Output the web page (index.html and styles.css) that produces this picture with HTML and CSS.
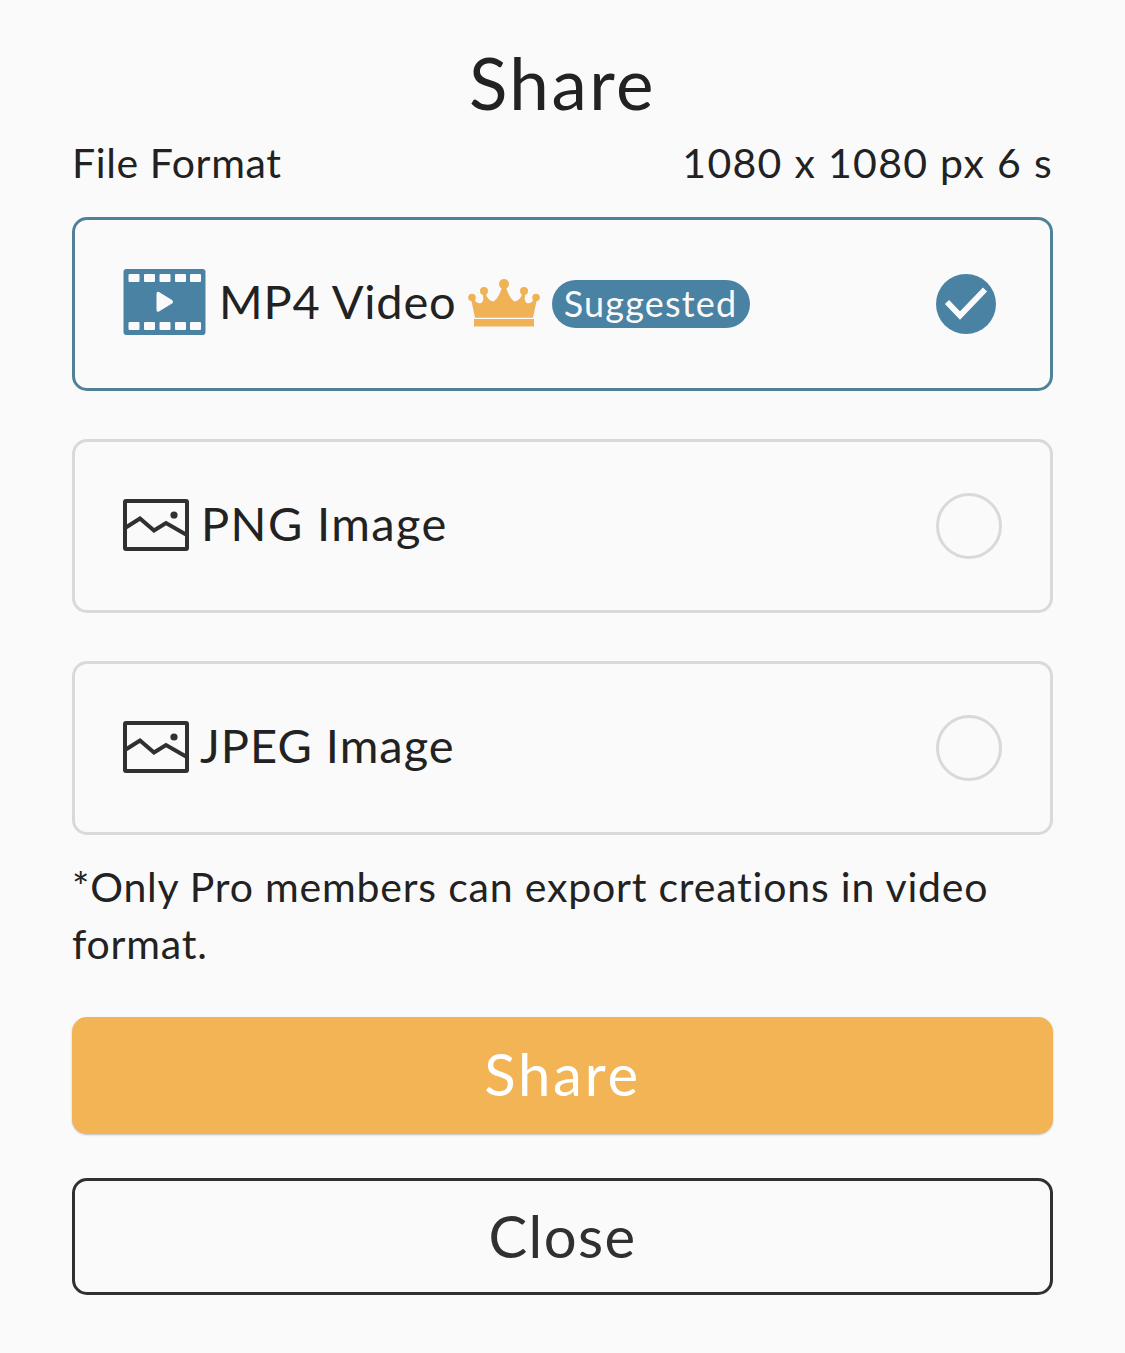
FILE: index.html
```html
<!DOCTYPE html>
<html lang="en">
<head>
  <meta charset="UTF-8">
  <meta name="viewport" content="width=device-width, initial-scale=1.0">
  <title>Share</title>
  <link rel="stylesheet" href="styles.css">
</head>
<body>

  <main class="share">
    <h1>Share</h1>

    <div class="info">
      <span class="info-label">File Format</span>
      <span class="info-size">1080 x 1080 px 6 s</span>
    </div>

    <!-- File formats -->
    <div class="options">
      <div class="option selected">
        <svg class="icon-film" viewBox="0 0 82 66">
          <rect width="82" height="66" rx="3" fill="#4a82a3"/>
          <g fill="#fafafa">
            <rect x="5" y="5" width="11" height="8" rx="1"/>
            <rect x="20.5" y="5" width="11" height="8" rx="1"/>
            <rect x="36" y="5" width="11" height="8" rx="1"/>
            <rect x="51.5" y="5" width="11" height="8" rx="1"/>
            <rect x="66.5" y="5" width="11" height="8" rx="1"/>
            <rect x="5" y="53" width="11" height="8" rx="1"/>
            <rect x="20.5" y="53" width="11" height="8" rx="1"/>
            <rect x="36" y="53" width="11" height="8" rx="1"/>
            <rect x="51.5" y="53" width="11" height="8" rx="1"/>
            <rect x="66.5" y="53" width="11" height="8" rx="1"/>
            <path d="M33 25Q33 22 35.500 23L48.500 31Q50.500 33 48.500 34.500L35.500 42.500Q33 43.500 33 41Z"/>
          </g>
        </svg>
        <span class="name">MP4 Video</span>
        <svg class="icon-crown" viewBox="0 0 72 48">
          <g fill="#efb257">
            <circle cx="4" cy="18.500" r="3.800"/>
            <circle cx="16" cy="12" r="4"/>
            <circle cx="36" cy="5" r="5"/>
            <circle cx="56" cy="12" r="4"/>
            <circle cx="68" cy="18.500" r="3.800"/>
            <path d="M3 20L6 20Q9 25.500 13.500 24Q16.500 22 14.500 14L17.500 14Q20 22 25.500 22.500Q31 19 34 8L38 8Q41 19 46.500 22.500Q52 22 54.500 14L57.500 14Q55.500 22 58.500 24Q63 25.500 66 20L69 20L65 38.800H7Z"/>
            <rect x="6" y="40" width="60" height="7.500"/>
          </g>
        </svg>
        <span class="badge">Suggested</span>
        <svg class="check" viewBox="0 0 60 60">
          <circle cx="30" cy="30" r="30" fill="#4a82a3"/>
          <path d="M11 28L24 41.500L49 15.500" fill="none" stroke="#fafafa" stroke-width="5.800"/>
        </svg>
      </div>

      <div class="option">
        <svg class="icon-image" viewBox="0 0 66 52">
          <rect x="2" y="2" width="62" height="48" rx="1" fill="none" stroke="#303032" stroke-width="4"/>
          <path d="M2 29L17 19.500L31 31.500L43 24L63 35.500" fill="none" stroke="#303032" stroke-width="4"/>
          <circle cx="51" cy="16" r="3.600" fill="#303032"/>
        </svg>
        <span class="name png">PNG Image</span>
        <span class="radio"></span>
      </div>

      <div class="option">
        <svg class="icon-image" viewBox="0 0 66 52">
          <rect x="2" y="2" width="62" height="48" rx="1" fill="none" stroke="#303032" stroke-width="4"/>
          <path d="M2 29L17 19.500L31 31.500L43 24L63 35.500" fill="none" stroke="#303032" stroke-width="4"/>
          <circle cx="51" cy="16" r="3.600" fill="#303032"/>
        </svg>
        <span class="name jpeg">JPEG Image</span>
        <span class="radio"></span>
      </div>
    </div>

    <p class="note">*Only Pro members can export creations in video format.</p>

    <button class="btn btn-share">Share</button>
    <button class="btn btn-close">Close</button>
  </main>

</body>
</html>
```
FILE: styles.css
```css
* {
  margin: 0;
  padding: 0;
  box-sizing: border-box;
}

body {
  font-family: Lato, sans-serif;
  background: #fafafa;
  color: #222;
}

.share {
  display: flex;
  flex-direction: column;
  padding: 42px 72px 58px;
}

h1 {
  height: 80px;
  font-size: 71px;
  font-weight: 400;
  line-height: 82px;
  letter-spacing: 2.5px;
  text-align: center;
}

.info {
  display: flex;
  justify-content: space-between;
  height: 80px;
  margin-bottom: 15px;
  font-size: 41px;
  line-height: 82px;
}

.info-label {
  letter-spacing: 0.6px;
}

.info-size {
  letter-spacing: 1.3px;
}

/* Format options */
.options {
  display: flex;
  flex-direction: column;
  gap: 48px;
}

.option {
  display: flex;
  align-items: center;
  height: 174px;
  padding: 0 48px;
  border: 3px solid #d9d9d9;
  border-radius: 15px;
}

.option.selected {
  padding-right: 54px;
  border-color: #4f8299;
}

.icon-film {
  width: 83px;
  height: 66px;
  margin: 0 13px 4px 0;
}

.icon-image {
  width: 66px;
  height: 52px;
  margin: 0 12px 2px 0;
}

.name {
  padding-bottom: 6px;
  font-size: 47px;
  line-height: 60px;
  letter-spacing: 0.8px;
  white-space: nowrap;
}

.name.png {
  letter-spacing: 1.4px;
}

.name.jpeg {
  margin-left: -1px;
  letter-spacing: 1px;
}

.icon-crown {
  width: 72px;
  height: 48px;
  margin: 0 12px 2px 11px;
}

.badge {
  width: 198px;
  height: 48px;
  border-radius: 24px;
  background: #4a82a3;
  color: #fafafa;
  font-size: 36px;
  line-height: 47px;
  letter-spacing: 1.2px;
  text-align: center;
}

.check {
  width: 60px;
  height: 60px;
  margin-left: auto;
}

.radio {
  width: 66px;
  height: 66px;
  margin-left: auto;
  border: 3px solid #d9d9d9;
  border-radius: 50%;
}

.note {
  margin: 23px 0 45px;
  font-size: 41px;
  line-height: 57px;
  letter-spacing: 0.8px;
}

/* Buttons */
.btn {
  height: 117px;
  padding-bottom: 3px;
  border: none;
  border-radius: 15px;
  font-family: inherit;
  font-size: 58px;
  line-height: 100px;
  letter-spacing: 1.4px;
}

.btn-share {
  margin-bottom: 44px;
  background: #f2b455;
  box-shadow: 0 1px 2px rgba(0, 0, 0, 0.25);
  color: #fff;
  letter-spacing: 2.8px;
}

.btn-close {
  padding-bottom: 2px;
  border: 3px solid #303032;
  background: transparent;
  color: #303032;
}
```
